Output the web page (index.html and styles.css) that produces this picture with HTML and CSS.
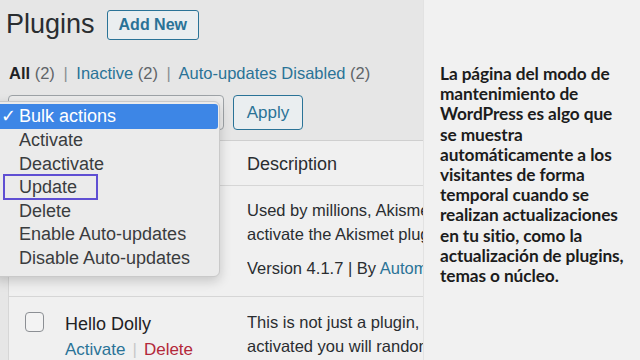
FILE: index.html
```html
<!DOCTYPE html>
<html lang="es">
<head>
<meta charset="utf-8">
<link rel="stylesheet" href="styles.css">
</head>
<body>
<div class="wp">
  <div class="head">
    <h1 class="title">Plugins</h1>
    <span class="btn-add">Add New</span>
  </div>
  <div class="filters">
    <span class="cur">All</span> <span class="count">(2)</span> <span class="sep">|</span>
    <span class="link">Inactive</span> <span class="count">(2)</span> <span class="sep">|</span>
    <span class="link">Auto-updates Disabled</span> <span class="count">(2)</span>
  </div>
  <div class="tablenav">
    <div class="select"></div>
    <span class="btn-apply">Apply</span>
  </div>
  <div class="table">
    <div class="row thead">
      <div class="c-left"></div>
      <div class="c-desc">Description</div>
    </div>
    <div class="row r1">
      <div class="c-left"></div>
      <div class="c-desc">
        <div class="dline">Used by millions, Akismet is quite possibly</div>
        <div class="dline">activate the Akismet plugin</div>
        <div class="dline ver">Version 4.1.7 | By <span class="link">Automattic</span></div>
      </div>
    </div>
    <div class="row r2">
      <div class="c-left">
        <span class="cb"></span>
        <div class="pname">
          <div class="pt">Hello Dolly</div>
          <div class="acts"><span class="link">Activate</span><span class="bar">|</span><span class="del">Delete</span></div>
        </div>
      </div>
      <div class="c-desc">
        <div class="dline">This is not just a plugin, it symbolizes</div>
        <div class="dline">activated you will randomly see a lyric</div>
      </div>
    </div>
  </div>
  <ul class="menu">
    <li class="sel"><span class="chk">✓</span>Bulk actions</li>
    <li>Activate</li>
    <li>Deactivate</li>
    <li><span class="mark">Update</span></li>
    <li>Delete</li>
    <li>Enable Auto-updates</li>
    <li>Disable Auto-updates</li>
  </ul>
</div>
<div class="panel">
  <p class="note">La página del modo de<br>mantenimiento de<br>WordPress es algo que<br>se muestra<br>automáticamente a los<br>visitantes de forma<br>temporal cuando se<br>realizan actualizaciones<br>en tu sitio, como la<br>actualización de plugins,<br>temas o núcleo.</p>
</div>
</body>
</html>
```
FILE: styles.css
```css
html, body {
  margin: 0;
  padding: 0;
}
body {
  width: 640px;
  height: 360px;
  overflow: hidden;
  display: flex;
  background: #f1f1f1;
}
.wp {
  position: relative;
  width: 423px;
  flex: none;
  background: #e6e6e6;
  font-family: "Liberation Sans", Arial, sans-serif;
  color: #2a2d30;
  overflow: hidden;
  border-right: 1px solid #e2e2e2;
}
.head {
  display: flex;
  align-items: center;
  gap: 12px;
  padding: 9px 0 0 6px;
  height: 31px;
}
.title {
  margin: 0;
  font-size: 27px;
  font-weight: 400;
  color: #2a2d30;
}
.btn-add {
  box-sizing: border-box;
  height: 30px;
  padding: 0 11px;
  display: flex;
  align-items: center;
  border: 1.5px solid #2a7397;
  border-radius: 3px;
  color: #2a7397;
  font-weight: 700;
  font-size: 16px;
  background: #eaeef0;
}
.filters {
  padding: 23px 0 0 9px;
  font-size: 16.5px;
  height: 21px;
  line-height: 21px;
  color: #606468;
  white-space: nowrap;
}
.filters .cur {
  color: #1f2225;
  font-weight: 700;
}
.filters .sep {
  color: #8b8f93;
  margin: 0 4px;
}
.link {
  color: #2a7397;
}
.tablenav {
  display: flex;
  gap: 9px;
  padding: 0 0 0 8px;
  margin-top: 11px;
  height: 35px;
  align-items: flex-end;
}
.select {
  width: 216px;
  height: 35px;
  box-sizing: border-box;
  border: 1px solid #9ea3a7;
  border-radius: 4px;
  background: #ececec;
}
.btn-apply {
  box-sizing: border-box;
  width: 70px;
  height: 35px;
  border: 1.5px solid #2a7397;
  border-radius: 4px;
  color: #2a7397;
  font-size: 17px;
  display: flex;
  align-items: center;
  justify-content: center;
  background: #eaeef0;
}
.table {
  margin: 10px 0 0 8px;
  border-top: 1px solid #cfcfcf;
  border-left: 1px solid #d6d6d6;
  background: #f0f0f0;
}
.row {
  display: flex;
  border-bottom: 1px solid #d6d6d6;
}
.c-left {
  width: 238px;
  flex: none;
}
.c-desc {
  flex: 1;
  white-space: nowrap;
  overflow: hidden;
  font-size: 16.5px;
  color: #2a2d30;
}
.thead {
  height: 44px;
  align-items: center;
}
.thead .c-desc {
  font-size: 18px;
  padding-top: 2px;
}
.r1 {
  height: 110px;
}
.r1 .c-desc {
  padding-top: 12px;
}
.dline {
  height: 24px;
  line-height: 24px;
}
.dline.ver {
  margin-top: 10px;
}
.r2 {
  height: 80px;
  border-bottom: none;
}
.r2 .c-left {
  display: flex;
  align-items: flex-start;
  gap: 20px;
  padding: 15px 0 0 16px;
  box-sizing: border-box;
}
.r2 .c-desc {
  padding-top: 13px;
}
.cb {
  width: 17px;
  height: 18px;
  border: 1.5px solid #8c8f94;
  border-radius: 4px;
  flex: none;
  background: #f3f3f3;
}
.pname {
  line-height: 26px;
  margin-top: -1px;
  margin-left: 1px;
}
.pt {
  color: #1f2225;
  font-size: 18px;
}
.acts {
  font-size: 17px;
}
.acts .bar {
  color: #c8c8c8;
  margin: 0 7px;
}
.acts .del {
  color: #b3283a;
}
.menu {
  position: absolute;
  left: -6px;
  top: 101px;
  width: 226px;
  margin: 0;
  padding: 2px 0 6px;
  list-style: none;
  background: #ebebeb;
  border: 1px solid #c9c9c9;
  border-radius: 6px;
  box-shadow: 0 4px 12px rgba(0, 0, 0, 0.18);
  box-sizing: border-box;
  font-size: 18px;
  color: #3a3c3e;
}
.menu li {
  height: 23.5px;
  line-height: 23.5px;
  padding-left: 24px;
  position: relative;
  white-space: nowrap;
}
.menu li.sel {
  background: #3d86e6;
  color: #fff;
  height: 25px;
  line-height: 25px;
  margin: 0 1px 0 0;
  border-radius: 3px;
}
.chk {
  position: absolute;
  left: 6px;
  top: 0;
}
.mark {
  display: inline-block;
  margin-left: -16px;
  padding-left: 14px;
  width: 77px;
  height: 22px;
  line-height: 22px;
  border: 2px solid #5f4fd3;
  position: relative;
  top: -2px;
}
.panel {
  flex: 1;
  padding: 64px 0 0 16px;
  background: #f1f1f1;
}
.note {
  margin: 0;
  font-family: Lato, "Noto Sans", sans-serif;
  font-weight: 700;
  font-size: 17.3px;
  line-height: 20.2px;
  color: #1c1c1c;
  white-space: nowrap;
  letter-spacing: -0.1px;
}
```
